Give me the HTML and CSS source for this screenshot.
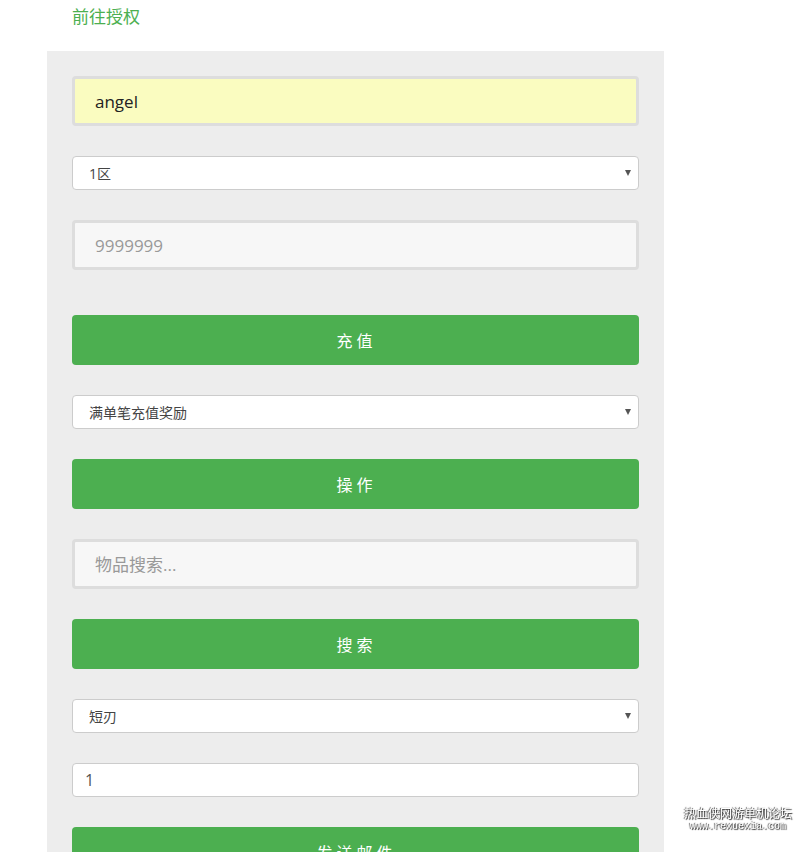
FILE: index.html
```html
<html>
<head>
    <meta charset="utf-8">
    <link rel="stylesheet" href="styles.css">
    <title>后台</title>
</head>
<body>
<div class="page">
    <a class="auth" href="#">前往授权</a>
    <form class="panel" onsubmit="return false;">
        <input class="big filled" type="text" name="user" value="angel">
        <div class="pick">
            <select name="zone">
                <option>1区</option>
                <option>2区</option>
            </select>
        </div>
        <input class="big" type="text" name="amount" placeholder="9999999">
        <button class="go first" type="button">充值</button>
        <div class="pick">
            <select name="action">
                <option>满单笔充值奖励</option>
            </select>
        </div>
        <button class="go" type="button">操作</button>
        <input class="big" type="text" name="keyword" placeholder="物品搜索...">
        <button class="go" type="button">搜索</button>
        <div class="pick">
            <select name="item">
                <option>短刃</option>
            </select>
        </div>
        <input class="small" type="text" name="count" value="1">
        <button class="go" type="button">发送邮件</button>
    </form>
</div>
<div class="mark">
    <div class="mark-name">热血侠网游单机论坛</div>
    <div class="mark-url">www.rexuexia.com</div>
</div>
</body>
</html>
```

FILE: styles.css
```css
body {
    margin: 0;
    font-family: "Open Sans", "Noto Sans CJK SC", sans-serif;
    background: #fff;
}

.page {
    width: 617px;
    margin-left: 47px;
}

.auth {
    display: block;
    padding: 5px 25px 0;
    height: 46px;
    color: #4caf50;
    font-size: 17px;
    line-height: 24px;
    text-decoration: none;
}

.panel {
    display: flex;
    flex-direction: column;
    gap: 30px;
    background: #ededed;
    padding: 25px 25px 40px;
}

.big {
    box-sizing: border-box;
    height: 50px;
    width: 100%;
    border: 3px solid #ddd;
    border-radius: 4px;
    background: #f7f7f7;
    padding: 0 20px;
    font-family: "Open Sans", "Noto Sans CJK SC", sans-serif;
    font-size: 17px;
    color: #222;
    outline: none;
}

.big.filled {
    background: #fafcc0;
}

.big::placeholder {
    color: #999;
}

.small {
    box-sizing: border-box;
    height: 34px;
    width: 100%;
    border: 1px solid #ccc;
    border-radius: 4px;
    background: #fff;
    padding: 0 12px;
    font-family: "Open Sans", "Noto Sans CJK SC", sans-serif;
    font-size: 16px;
    color: #555;
}

.pick {
    position: relative;
}

.pick select {
    -webkit-appearance: none;
    appearance: none;
    box-sizing: border-box;
    display: block;
    width: 100%;
    height: 34px;
    border: 1px solid #ccc;
    border-radius: 4px;
    background: #fff;
    padding: 0 16px;
    font-family: "Open Sans", "Noto Sans CJK SC", sans-serif;
    font-size: 14px;
    color: #444;
}

/* little dropdown arrow on the right */
.pick::after {
    content: "";
    position: absolute;
    right: 8px;
    top: 14px;
    border-left: 3px solid transparent;
    border-right: 3px solid transparent;
    border-top: 6px solid #555;
    pointer-events: none;
}

.go {
    height: 50px;
    width: 100%;
    border: 0;
    border-radius: 4px;
    background: #4caf50;
    color: #fff;
    font-family: "Open Sans", "Noto Sans CJK SC", sans-serif;
    font-size: 16px;
    letter-spacing: 4px;
    padding-left: 8px;
}

.go.first {
    margin-top: 15px;
}

.mark {
    position: fixed;
    right: 11px;
    bottom: 18px;
    text-align: center;
    color: #fff;
    text-shadow: 1px 1px 1px #333, -1px 0 1px #555;
    line-height: 14px;
}

.mark-name {
    font-family: "Noto Sans CJK SC", sans-serif;
    font-size: 12px;
}

.mark-url {
    font-family: "Liberation Mono", monospace;
    font-size: 10px;
}
```
